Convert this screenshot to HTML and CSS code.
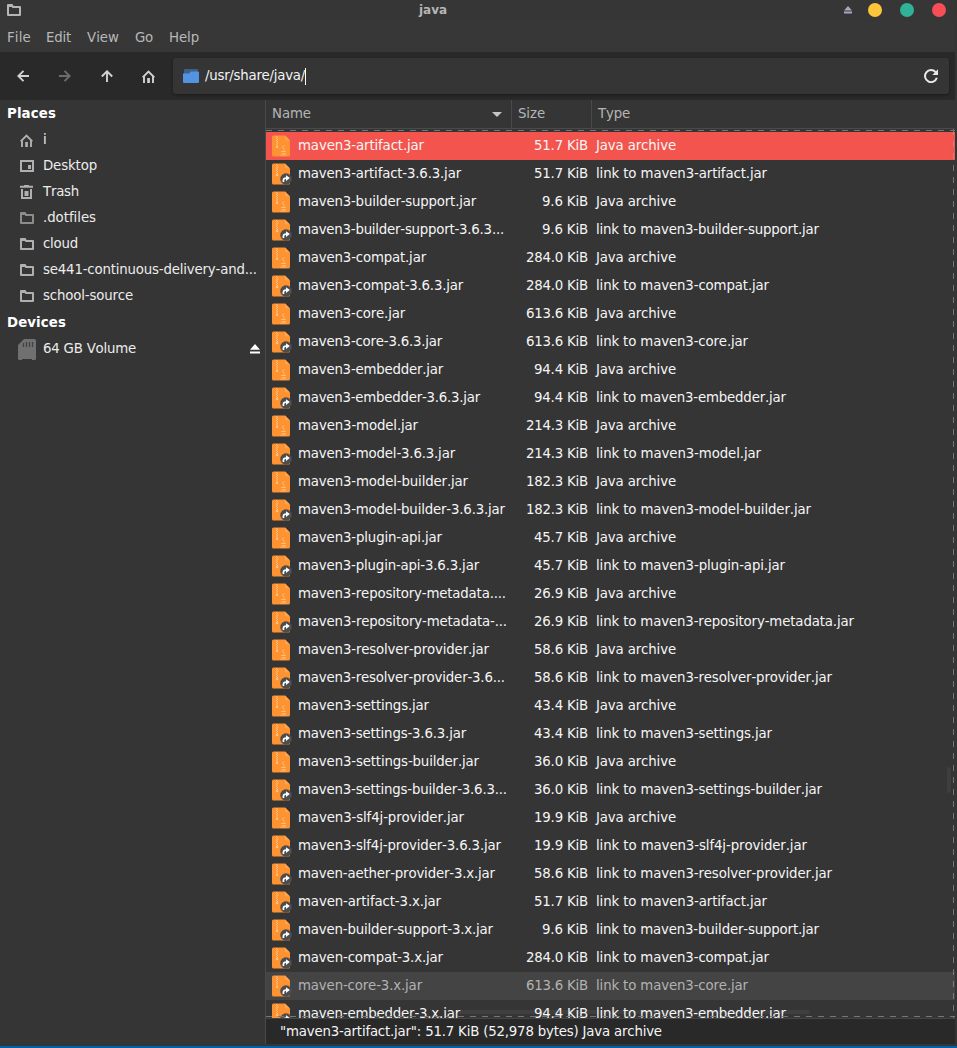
FILE: index.html
```html
<!DOCTYPE html>
<html lang="en">
<head>
<meta charset="utf-8">
<title>java</title>
<link rel="stylesheet" href="styles.css">
</head>
<body>
<svg class="defs" width="0" height="0">
  <symbol id="folder" viewBox="0 0 14 12"><path d="M1 1h4l1 2H13v8H1z" fill="none" stroke="currentColor" stroke-width="2" stroke-linejoin="round"/><path d="M1 1h4.500l1 2H1z" fill="currentColor"/></symbol>
  <symbol id="home" viewBox="0 0 13 13"><path d="M.7 7.400 6.500 1.500l5.800 5.900M2 6.500V13M11 6.500V13" fill="none" stroke="currentColor" stroke-width="1.900"/><path d="M5.200 8h2.700v5H5.200z" fill="currentColor"/></symbol>
  <symbol id="back" viewBox="0 0 12 12"><path d="M12 6H1.500M6.500 .8 1.300 6l5.200 5.200" fill="none" stroke="currentColor" stroke-width="1.900"/></symbol>
  <symbol id="eject" viewBox="0 0 10 10"><path d="M5 0l5 5.700H0zM0 7.600h10v2H0z" fill="currentColor"/></symbol>
  <g id="jar"><path d="M1.500 .5h11.500L18 5.500V20q0 1.500-1.500 1.500h-15Q0 21.500 0 20V2Q0 .5 1.500 .5z" fill="#ff9331"/><path d="M13 .5 18 5.500h-3.500Q13 5.500 13 4z" fill="#ffa550"/><path d="M4.500 1v10M5.500 2v10" stroke="#ffc48a" stroke-width="1" stroke-dasharray="1 1"/><path d="M4 11h2v2H4z" fill="#ffc48a"/></g>
  <g id="cup"><path d="M12.500 10q-3 2-1 3.500t0 2.500M9 16.500h5M10 18.500h3.500M8.500 20h6" fill="none" stroke="#ffbf80" stroke-width=".9"/></g>
  <g id="link"><circle cx="6" cy="6" r="5.800" fill="#4d4d4d"/><path d="M3.400 9V7.500Q3.400 5 6.200 5" fill="none" stroke="#fff" stroke-width="1.700"/><path d="M6 2.300 9.800 5 6 7.900z" fill="#fff"/></g>
</svg>
<div class="window">
  <header class="titlebar">
    <svg class="title-icon"><use href="#folder"/></svg>
    <span class="title">java</span>
    <div class="controls"><svg class="shade" viewBox="0 0 8 8"><path d="M4 0l4 4.500H0zM0 5.500h8V7.500H0z" fill="#a5abbc"/></svg><i class="dot yellow"></i><i class="dot green"></i><i class="dot red"></i></div>
  </header>
  <nav class="menu"><span>File</span><span>Edit</span><span>View</span><span>Go</span><span>Help</span></nav>
  <div class="toolbar">
    <div class="nav">
      <svg><use href="#back"/></svg>
      <svg class="forward"><use href="#back"/></svg>
      <svg class="up"><use href="#back"/></svg>
      <svg class="home"><use href="#home"/></svg>
    </div>
    <div class="path">
      <svg class="path-icon" viewBox="0 0 16 14"><path d="M1 1q0-1 1-1h12q1 0 1 1v5H1z" fill="#3f5f88"/><path d="M0 4.500h6l2-2h7q1 0 1 1V13q0 1-1 1H1q-1 0-1-1z" fill="#5294e2"/></svg>
      <span>/usr/share/java/</span><i class="caret"></i>
      <svg class="reload" viewBox="0 0 14 14"><path d="M11.600 3.200A6 6 0 1 0 12.800 8.800" fill="none" stroke="currentColor" stroke-width="2"/><path d="M14 .3V6H8.300z" fill="currentColor"/></svg>
    </div>
  </div>
  <div class="main">
    <aside class="sidebar">
      <h2><span>Places</span></h2>
      <ul>
        <li><svg class="side-home"><use href="#home"/></svg><span>i</span></li>
        <li><svg class="side-desktop" viewBox="0 0 14 12"><path d="M1 1h12v10H1z" fill="none" stroke="currentColor" stroke-width="2"/><path d="M8 5h3v4H8z" fill="currentColor"/></svg><span>Desktop</span></li>
        <li><svg class="side-trash" viewBox="0 0 14 14"><path d="M0 .8h4V0h5v.8h4v2H0zM4.500 6h4v5h-4z" fill="currentColor"/><path d="M2 4v9h9V4" fill="none" stroke="currentColor" stroke-width="2"/></svg><span>Trash</span></li>
        <li><svg class="side-folder dim"><use href="#folder"/></svg><span>.dotfiles</span></li>
        <li><svg class="side-folder"><use href="#folder"/></svg><span>cloud</span></li>
        <li><svg class="side-folder"><use href="#folder"/></svg><span>se441-continuous-delivery-and...</span></li>
        <li><svg class="side-folder"><use href="#folder"/></svg><span>school-source</span></li>
      </ul>
      <h2 class="devices"><span>Devices</span></h2>
      <ul>
        <li><svg class="side-card" viewBox="0 0 18 21"><path d="M6 0h10.500Q18 0 18 1.500V19.500q0 1.500-1.500 1.500H14v-1H4v1H1.500Q0 21 0 19.500V6z" fill="#707070"/><path d="M5.500 4v4M8.500 3v5M11.500 3v5M14.500 3v5" stroke="#404040" stroke-width="1.200"/></svg><span>64 GB Volume</span><svg class="side-eject"><use href="#eject"/></svg></li>
      </ul>
    </aside>
    <section class="content">
      <div class="columns"><div class="col-name"><span>Name</span><i class="sort"></i></div><div class="col-size"><span>Size</span></div><div class="col-type"><span>Type</span></div></div>
      <div class="list">
        <div class="row selected"><svg class="icon"><use href="#jar"/><use href="#cup"/></svg><div class="name"><span>maven3-artifact.jar</span></div><div class="size"><span>51.7 KiB</span></div><span class="type">Java archive</span></div>
        <div class="row"><svg class="icon"><use href="#jar"/><use href="#link" class="badge"/></svg><div class="name"><span>maven3-artifact-3.6.3.jar</span></div><div class="size"><span>51.7 KiB</span></div><span class="type">link to maven3-artifact.jar</span></div>
        <div class="row"><svg class="icon"><use href="#jar"/><use href="#cup"/></svg><div class="name"><span>maven3-builder-support.jar</span></div><div class="size"><span>9.6 KiB</span></div><span class="type">Java archive</span></div>
        <div class="row"><svg class="icon"><use href="#jar"/><use href="#link" class="badge"/></svg><div class="name"><span>maven3-builder-support-3.6.3...</span></div><div class="size"><span>9.6 KiB</span></div><span class="type">link to maven3-builder-support.jar</span></div>
        <div class="row"><svg class="icon"><use href="#jar"/><use href="#cup"/></svg><div class="name"><span>maven3-compat.jar</span></div><div class="size"><span>284.0 KiB</span></div><span class="type">Java archive</span></div>
        <div class="row"><svg class="icon"><use href="#jar"/><use href="#link" class="badge"/></svg><div class="name"><span>maven3-compat-3.6.3.jar</span></div><div class="size"><span>284.0 KiB</span></div><span class="type">link to maven3-compat.jar</span></div>
        <div class="row"><svg class="icon"><use href="#jar"/><use href="#cup"/></svg><div class="name"><span>maven3-core.jar</span></div><div class="size"><span>613.6 KiB</span></div><span class="type">Java archive</span></div>
        <div class="row"><svg class="icon"><use href="#jar"/><use href="#link" class="badge"/></svg><div class="name"><span>maven3-core-3.6.3.jar</span></div><div class="size"><span>613.6 KiB</span></div><span class="type">link to maven3-core.jar</span></div>
        <div class="row"><svg class="icon"><use href="#jar"/><use href="#cup"/></svg><div class="name"><span>maven3-embedder.jar</span></div><div class="size"><span>94.4 KiB</span></div><span class="type">Java archive</span></div>
        <div class="row"><svg class="icon"><use href="#jar"/><use href="#link" class="badge"/></svg><div class="name"><span>maven3-embedder-3.6.3.jar</span></div><div class="size"><span>94.4 KiB</span></div><span class="type">link to maven3-embedder.jar</span></div>
        <div class="row"><svg class="icon"><use href="#jar"/><use href="#cup"/></svg><div class="name"><span>maven3-model.jar</span></div><div class="size"><span>214.3 KiB</span></div><span class="type">Java archive</span></div>
        <div class="row"><svg class="icon"><use href="#jar"/><use href="#link" class="badge"/></svg><div class="name"><span>maven3-model-3.6.3.jar</span></div><div class="size"><span>214.3 KiB</span></div><span class="type">link to maven3-model.jar</span></div>
        <div class="row"><svg class="icon"><use href="#jar"/><use href="#cup"/></svg><div class="name"><span>maven3-model-builder.jar</span></div><div class="size"><span>182.3 KiB</span></div><span class="type">Java archive</span></div>
        <div class="row"><svg class="icon"><use href="#jar"/><use href="#link" class="badge"/></svg><div class="name"><span>maven3-model-builder-3.6.3.jar</span></div><div class="size"><span>182.3 KiB</span></div><span class="type">link to maven3-model-builder.jar</span></div>
        <div class="row"><svg class="icon"><use href="#jar"/><use href="#cup"/></svg><div class="name"><span>maven3-plugin-api.jar</span></div><div class="size"><span>45.7 KiB</span></div><span class="type">Java archive</span></div>
        <div class="row"><svg class="icon"><use href="#jar"/><use href="#link" class="badge"/></svg><div class="name"><span>maven3-plugin-api-3.6.3.jar</span></div><div class="size"><span>45.7 KiB</span></div><span class="type">link to maven3-plugin-api.jar</span></div>
        <div class="row"><svg class="icon"><use href="#jar"/><use href="#cup"/></svg><div class="name"><span>maven3-repository-metadata....</span></div><div class="size"><span>26.9 KiB</span></div><span class="type">Java archive</span></div>
        <div class="row"><svg class="icon"><use href="#jar"/><use href="#link" class="badge"/></svg><div class="name"><span>maven3-repository-metadata-...</span></div><div class="size"><span>26.9 KiB</span></div><span class="type">link to maven3-repository-metadata.jar</span></div>
        <div class="row"><svg class="icon"><use href="#jar"/><use href="#cup"/></svg><div class="name"><span>maven3-resolver-provider.jar</span></div><div class="size"><span>58.6 KiB</span></div><span class="type">Java archive</span></div>
        <div class="row"><svg class="icon"><use href="#jar"/><use href="#link" class="badge"/></svg><div class="name"><span>maven3-resolver-provider-3.6...</span></div><div class="size"><span>58.6 KiB</span></div><span class="type">link to maven3-resolver-provider.jar</span></div>
        <div class="row"><svg class="icon"><use href="#jar"/><use href="#cup"/></svg><div class="name"><span>maven3-settings.jar</span></div><div class="size"><span>43.4 KiB</span></div><span class="type">Java archive</span></div>
        <div class="row"><svg class="icon"><use href="#jar"/><use href="#link" class="badge"/></svg><div class="name"><span>maven3-settings-3.6.3.jar</span></div><div class="size"><span>43.4 KiB</span></div><span class="type">link to maven3-settings.jar</span></div>
        <div class="row"><svg class="icon"><use href="#jar"/><use href="#cup"/></svg><div class="name"><span>maven3-settings-builder.jar</span></div><div class="size"><span>36.0 KiB</span></div><span class="type">Java archive</span></div>
        <div class="row"><svg class="icon"><use href="#jar"/><use href="#link" class="badge"/></svg><div class="name"><span>maven3-settings-builder-3.6.3...</span></div><div class="size"><span>36.0 KiB</span></div><span class="type">link to maven3-settings-builder.jar</span></div>
        <div class="row"><svg class="icon"><use href="#jar"/><use href="#cup"/></svg><div class="name"><span>maven3-slf4j-provider.jar</span></div><div class="size"><span>19.9 KiB</span></div><span class="type">Java archive</span></div>
        <div class="row"><svg class="icon"><use href="#jar"/><use href="#link" class="badge"/></svg><div class="name"><span>maven3-slf4j-provider-3.6.3.jar</span></div><div class="size"><span>19.9 KiB</span></div><span class="type">link to maven3-slf4j-provider.jar</span></div>
        <div class="row"><svg class="icon"><use href="#jar"/><use href="#link" class="badge"/></svg><div class="name"><span>maven-aether-provider-3.x.jar</span></div><div class="size"><span>58.6 KiB</span></div><span class="type">link to maven3-resolver-provider.jar</span></div>
        <div class="row"><svg class="icon"><use href="#jar"/><use href="#link" class="badge"/></svg><div class="name"><span>maven-artifact-3.x.jar</span></div><div class="size"><span>51.7 KiB</span></div><span class="type">link to maven3-artifact.jar</span></div>
        <div class="row"><svg class="icon"><use href="#jar"/><use href="#link" class="badge"/></svg><div class="name"><span>maven-builder-support-3.x.jar</span></div><div class="size"><span>9.6 KiB</span></div><span class="type">link to maven3-builder-support.jar</span></div>
        <div class="row"><svg class="icon"><use href="#jar"/><use href="#link" class="badge"/></svg><div class="name"><span>maven-compat-3.x.jar</span></div><div class="size"><span>284.0 KiB</span></div><span class="type">link to maven3-compat.jar</span></div>
        <div class="row hover"><svg class="icon"><use href="#jar"/><use href="#link" class="badge"/></svg><div class="name"><span>maven-core-3.x.jar</span></div><div class="size"><span>613.6 KiB</span></div><span class="type">link to maven3-core.jar</span></div>
        <div class="row"><svg class="icon"><use href="#jar"/><use href="#link" class="badge"/></svg><div class="name"><span>maven-embedder-3.x.jar</span></div><div class="size"><span>94.4 KiB</span></div><span class="type">link to maven3-embedder.jar</span></div>
        <i class="focus"></i><i class="vscroll"></i><i class="hscroll"></i>
      </div>
      <footer class="status"><span>"maven3-artifact.jar": 51.7 KiB (52,978 bytes) Java archive</span></footer>
    </section>
  </div>
</div>
<script src="spacing.js"></script>
</body>
</html>
```
FILE: spacing.js
```js
// Snap each label to the width it has when every glyph advances by whole pixels at 10pt.
const ctx = document.createElement('canvas').getContext('2d');
const cache = {};
function advance(ch, weight) {
  const key = weight + ch;
  if (!(key in cache)) {
    ctx.font = weight + ' 100px "DejaVu Sans"';
    cache[key] = ctx.measureText(ch).width * 13.333 / 100;
  }
  return cache[key];
}
document.querySelectorAll('span:not(.title)').forEach((el) => {
  const chars = [...el.textContent];
  const weight = getComputedStyle(el).fontWeight;
  let target = 0;
  let natural = 0;
  chars.forEach((ch) => {
    const width = advance(ch, weight);
    target += Math.round(width);
    natural += width;
  });
  el.style.letterSpacing = ((target - natural) / chars.length).toFixed(4) + 'px';
});
```
FILE: styles.css
```css
* { box-sizing: border-box; }
body { margin: 0; height: 1048px; overflow: hidden; background: #353535; color: #f5f5f5; font: 13.333px/16px "DejaVu Sans", sans-serif; font-kerning: none; }
svg { display: block; flex: none; }
i { display: block; flex: none; }
.defs { position: absolute; }
.window { display: flex; flex-direction: column; width: 957px; height: 1048px; padding-right: 2px; border-bottom: 2px solid #0062a8; }
.titlebar { display: flex; align-items: center; justify-content: space-between; height: 21px; padding: 0 9px 1px 7px; color: #b5b5b5; background: #363636; }
.title-icon { width: 14px; height: 12px; }
.title { font-size: 12px; font-weight: bold; margin-left: 1px; }
.controls { display: flex; align-items: center; gap: 18px; }
.shade { width: 8px; height: 8px; margin-right: -2px; }
.dot { width: 14px; height: 14px; border-radius: 50%; }
.yellow { background: #fdc63a; }
.green { background: #30b298; }
.red { background: #f84f56; }
.menu { display: flex; gap: 16px; height: 31px; padding: 9px 7px; background: #373737; color: #b8b8b8; }
.menu span:first-child { margin-right: -1px; }
.toolbar { display: flex; height: 48px; padding: 6px 6px 6px 17px; background: #292929; }
.nav { display: flex; align-items: center; gap: 30px; width: 156px; color: #d2d2d2; }
.nav svg { width: 12px; height: 12px; }
.nav .forward { transform: scaleX(-1); color: #6d6d6d; }
.nav .up { transform: rotate(90deg); }
.nav .home { width: 13px; height: 13px; margin-left: -1px; }
.path { display: flex; align-items: center; flex: 1; height: 36px; padding: 0 11px 0 10px; border-radius: 3px; background: #353535; box-shadow: 0 1px 3px rgba(0,0,0,.4); color: #f3f3f3; }
.path-icon { width: 16px; height: 14px; margin-right: 6px; }
.caret { width: 1px; height: 17px; background: #fff; }
.reload { width: 14px; height: 14px; margin-left: auto; color: #e8e8e8; }
.main { display: flex; flex: 1; min-height: 0; }
.sidebar { flex: none; width: 266px; padding-top: 1px; background: #353535; }
.sidebar h2 { margin: 0; padding: 0 7px; height: 26px; font-size: 13.333px; line-height: 26px; color: #fff; }
.sidebar .devices { height: 27px; line-height: 28px; }
.sidebar ul { list-style: none; margin: 0; padding: 0; }
.sidebar li { display: flex; align-items: center; height: 26px; padding: 0 6px 0 20px; color: #ececec; white-space: nowrap; }
.sidebar li svg { color: #b0b0b0; }
.side-home { width: 13px; height: 13px; margin-right: 10px; }
.side-desktop, .side-folder { width: 14px; height: 12px; margin-right: 9px; }
.side-trash { width: 14px; height: 14px; margin-right: 9px; }
.sidebar li .dim { color: #8c8c8c; }
.side-card { width: 18px; height: 21px; margin: 0 7px 0 -2px; }
.sidebar li .side-eject { width: 10px; height: 10px; margin-left: auto; color: #fff; }
.content { display: flex; flex-direction: column; flex: none; width: 689px; height: 944px; box-shadow: -1px 0 #4a4a4a; }
.columns { display: flex; height: 29px; border-bottom: 1px solid #4a4a4a; color: #b5b5b5; line-height: 28px; }
.columns div { display: flex; align-items: center; padding-left: 6px; border-right: 1px solid #4a4a4a; }
.columns .col-name { width: 246px; }
.columns .col-size { width: 80px; }
.columns .col-type { border: 0; }
.sort { width: 0; height: 0; margin: 1px 9px 0 auto; border: 5px solid transparent; border-top-color: #c5c5c5; border-bottom: 0; }
.list { position: relative; height: 889px; padding-top: 3px; overflow: hidden; }
.row { display: flex; align-items: center; height: 28px; padding-left: 6px; white-space: nowrap; }
.icon { width: 20px; height: 22px; margin-right: 6px; }
.icon .badge { transform: translate(8px, 10px); }
.name { width: 212px; }
.size { width: 78px; text-align: right; }
.type { margin-left: 8px; }
.selected { background: #f3554e; }
.hover { background: #444; color: #b2b2b2; }
.focus { position: absolute; inset: 0; background: repeating-linear-gradient(90deg, #777 0 6px, transparent 6px 12px) 0 1px / 100% 1px no-repeat, repeating-linear-gradient(90deg, #777 0 6px, transparent 6px 12px) 0 887px / 100% 1px no-repeat, repeating-linear-gradient(rgba(170,170,170,.55) 0 6px, transparent 6px 12px) 687px 0 / 1px 100% no-repeat; }
.vscroll { position: absolute; left: 681px; top: 638px; width: 4px; height: 26px; border-radius: 2px; background: #3e3e3e; }
.hscroll { position: absolute; left: 192px; top: 881px; width: 352px; height: 4px; border-radius: 2px; background: rgba(255,255,255,.05); }
.status { height: 26px; padding: 5px 14px; border-top: 1px solid #444; background: #292929; }
```
